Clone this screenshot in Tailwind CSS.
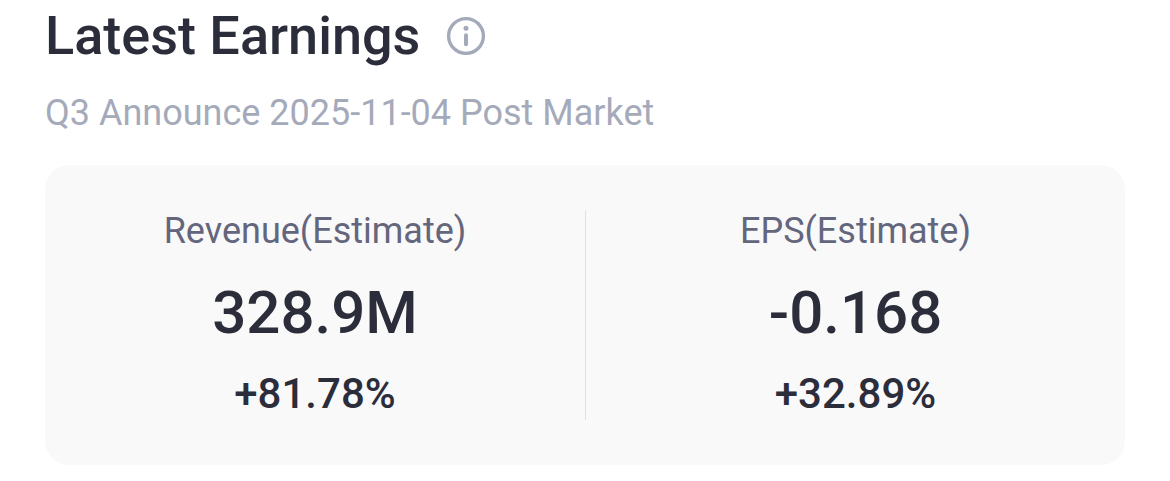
<!DOCTYPE html>
<html lang="en">
<head>
    <meta charset="UTF-8">
    <meta name="viewport" content="width=device-width, initial-scale=1.0">
    <title>Latest Earnings</title>
    <script src="https://cdn.jsdelivr.net/npm/@tailwindcss/browser@4"></script>
</head>
<body class="bg-white font-[Roboto,sans-serif] text-[#2c2d3b]">
    <main class="px-[45px] pb-4">
        <!-- Heading -->
        <div class="flex items-center gap-[26px]">
            <h1 class="text-[54px] leading-[72px] font-medium">Latest Earnings</h1>
            <button type="button" aria-label="About earnings" class="text-[#a5aaba]">
                <svg class="size-10" viewBox="0 0 40 40" fill="none" stroke="currentColor">
                    <circle cx="20" cy="20" r="17.4" stroke-width="3.4"/>
                    <circle cx="20" cy="12.2" r="2.5" fill="currentColor" stroke="none"/>
                    <path d="M20 19.3V28.2" stroke-width="4" stroke-linecap="round"/>
                </svg>
            </button>
        </div>
        <p class="mt-[17px] text-[36px] leading-[48px] text-[#a5aaba]">Q3 Announce 2025-11-04 Post Market</p>

        <!-- Estimates -->
        <section class="mt-7 grid grid-cols-2 rounded-3xl bg-[#f9f9f9] py-[45px] text-center">
            <div>
                <h2 class="text-[36px] leading-[42px] text-[#64667d]">Revenue(Estimate)</h2>
                <p class="mt-6 text-[60px] leading-[74px] font-medium">328.9M</p>
                <p class="mt-[18px] text-[42px] leading-[52px] font-medium">+81.78%</p>
            </div>
            <div class="border-l border-[#e0e1e5]">
                <h2 class="text-[36px] leading-[42px] text-[#64667d]">EPS(Estimate)</h2>
                <p class="mt-6 text-[60px] leading-[74px] font-medium">-0.168</p>
                <p class="mt-[18px] text-[42px] leading-[52px] font-medium">+32.89%</p>
            </div>
        </section>
    </main>
</body>
</html>
